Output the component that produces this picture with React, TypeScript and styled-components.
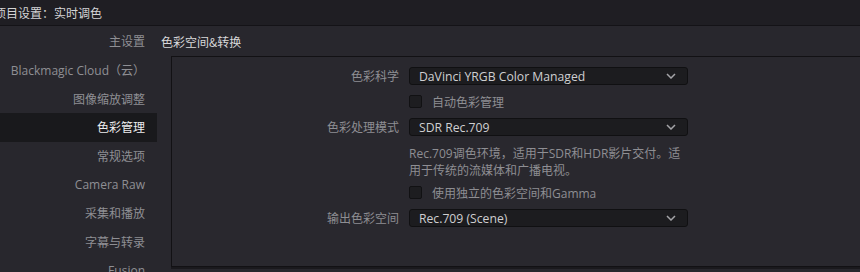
import React from 'react';
import styled, { createGlobalStyle } from 'styled-components';

const GlobalStyle = createGlobalStyle`
  html, body {
    margin: 0;
    padding: 0;
    background: #28272d;
    overflow: hidden;
  }
  body {
    font-family: "Open Sans", "Noto Sans CJK SC", sans-serif;
  }
`;

const NAV_ITEMS = [
  '主设置',
  'Blackmagic Cloud（云）',
  '图像缩放调整',
  '色彩管理',
  '常规选项',
  'Camera Raw',
  '采集和播放',
  '字幕与转录',
  'Fusion',
];

const Chevron = () => (
  <svg width="10" height="6" viewBox="0 0 10 6">
    <path d="M1 1 L5 5 L9 1" fill="none" stroke="#a4a4a8" strokeWidth="1.5" />
  </svg>
);

export default function App() {
  return (
    <React.Fragment>
      <GlobalStyle />
      <Window>
        <TitleBar>
          <TitleText>项目设置：实时调色</TitleText>
        </TitleBar>
        <Body>
          <Sidebar>
            {NAV_ITEMS.map(item => (
              <NavItem key={item} $active={item === '色彩管理'}>
                {item}
              </NavItem>
            ))}
          </Sidebar>
          <Main>
            <SectionTitle>色彩空间&amp;转换</SectionTitle>
            <Panel>
              <Form>
                <Label>色彩科学</Label>
                <Select>
                  <span>DaVinci YRGB Color Managed</span>
                  <Chevron />
                </Select>

                <Spacer />
                <CheckRow>
                  <Box />
                  <CheckText>自动色彩管理</CheckText>
                </CheckRow>

                <Label>色彩处理模式</Label>
                <Select>
                  <span>SDR Rec.709</span>
                  <Chevron />
                </Select>

                <Spacer />
                <Description>
                  Rec.709调色环境，适用于SDR和HDR影片交付。适
                  <br />
                  用于传统的流媒体和广播电视。
                </Description>

                <Spacer />
                <CheckRow>
                  <Box />
                  <CheckText>使用独立的色彩空间和Gamma</CheckText>
                </CheckRow>

                <Label>输出色彩空间</Label>
                <Select>
                  <span>Rec.709 (Scene)</span>
                  <Chevron />
                </Select>
              </Form>
            </Panel>
          </Main>
        </Body>
      </Window>
    </React.Fragment>
  );
}

const Window = styled.div`
  width: 860px;
  height: 272px;
  display: flex;
  flex-direction: column;
  background: #28272d;
  overflow: hidden;
`;

const TitleBar = styled.div`
  height: 25px;
  flex: none;
  display: flex;
  align-items: center;
  background: #1f1e23;
  border-bottom: 1px solid #141317;
`;

const TitleText = styled.div`
  margin-left: -6px;
  font-size: 12px;
  color: #d4d4d6;
  font-family: "Noto Sans CJK SC", sans-serif;
`;

const Body = styled.div`
  flex: 1;
  display: flex;
`;

const Sidebar = styled.div`
  width: 157px;
  flex: none;
  display: flex;
  flex-direction: column;
  padding-top: 1px;
`;

const NavItem = styled.div<{ $active?: boolean }>`
  height: 28.7px;
  flex: none;
  display: flex;
  align-items: center;
  justify-content: flex-end;
  padding-right: 12px;
  font-size: 12px;
  white-space: nowrap;
  color: ${p => (p.$active ? '#ececee' : '#8f8f94')};
  background: ${p => (p.$active ? '#19191c' : 'transparent')};
`;

const Main = styled.div`
  flex: 1;
  display: flex;
  flex-direction: column;
  padding-left: 4px;
`;

const SectionTitle = styled.div`
  height: 30px;
  display: flex;
  align-items: center;
  font-size: 12px;
  color: #d8d8da;
  font-family: "Noto Sans CJK SC", sans-serif;
`;

const Panel = styled.div`
  margin-left: 10px;
  height: 209px;
  border: 1px solid #121114;
  border-right: none;
  background: #29282e;
  box-shadow: 0 2px 0 #1a191d;
`;

const Form = styled.div`
  display: grid;
  grid-template-columns: 227px 279px;
  column-gap: 10px;
  row-gap: 10px;
  padding-top: 10px;
  align-items: center;
`;

const Label = styled.div`
  justify-self: end;
  font-size: 12px;
  color: #8e8e93;
`;

const Spacer = styled.div``;

const Select = styled.div`
  height: 18px;
  box-sizing: border-box;
  display: flex;
  align-items: center;
  justify-content: space-between;
  padding: 0 11px 0 9px;
  background: #1c1c1f;
  border: 1px solid #101012;
  border-radius: 3px;
  font-size: 12.2px;
  color: #cfcfd1;
`;

const CheckRow = styled.div`
  height: 13px;
  display: flex;
  align-items: center;
  gap: 10px;
`;

const Box = styled.div`
  width: 13px;
  height: 13px;
  box-sizing: border-box;
  background: #1d1d20;
  border: 1px solid #111113;
  border-radius: 2px;
  flex: none;
`;

const CheckText = styled.div`
  font-size: 12px;
  color: #8e8e93;
  white-space: nowrap;
`;

const Description = styled.div`
  font-size: 12px;
  line-height: 17px;
  color: #8e8e93;
  margin: -1px 0 -3px;
  white-space: nowrap;
`;
